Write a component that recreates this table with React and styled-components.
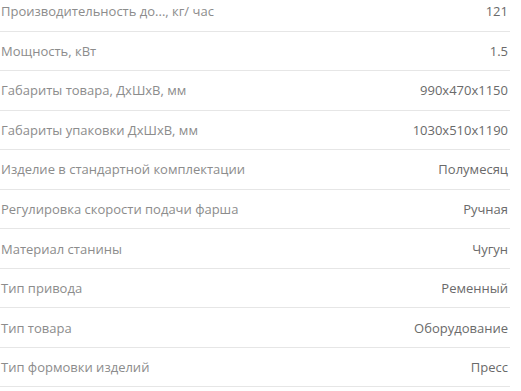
import React from "react";
import styled, { createGlobalStyle } from "styled-components";

const GlobalStyle = createGlobalStyle`
  html, body {
    margin: 0;
    padding: 0;
    background: #ffffff;
    overflow: hidden;
  }
  body {
    font-family: "Open Sans", "Liberation Sans", sans-serif;
  }
`;

const SpecList = styled.ul`
  list-style: none;
  margin: -8px 0 0 0;
  padding: 0;
  width: 510px;
`;

const SpecRow = styled.li`
  box-sizing: border-box;
  height: 39.56px;
  display: flex;
  align-items: center;
  justify-content: space-between;
  border-bottom: 1px solid #e6e6e6;
  padding: 0 2px 0 1px;
  font-size: 13px;
`;

const Label = styled.span`
  color: #8c8c8c;
`;

const Value = styled.span`
  color: #6a6a6a;
  text-align: right;
`;

const specs = [
  ["Производительность до..., кг/ час", "121"],
  ["Мощность, кВт", "1.5"],
  ["Габариты товара, ДхШхВ, мм", "990x470x1150"],
  ["Габариты упаковки ДхШхВ, мм", "1030x510x1190"],
  ["Изделие в стандартной комплектации", "Полумесяц"],
  ["Регулировка скорости подачи фарша", "Ручная"],
  ["Материал станины", "Чугун"],
  ["Тип привода", "Ременный"],
  ["Тип товара", "Оборудование"],
  ["Тип формовки изделий", "Пресс"],
];

export default function App() {
  return (
    <>
      <GlobalStyle />
      <SpecList>
        {specs.map(([label, value]) => (
          <SpecRow key={label}>
            <Label>{label}</Label>
            <Value>{value}</Value>
          </SpecRow>
        ))}
      </SpecList>
    </>
  );
}
